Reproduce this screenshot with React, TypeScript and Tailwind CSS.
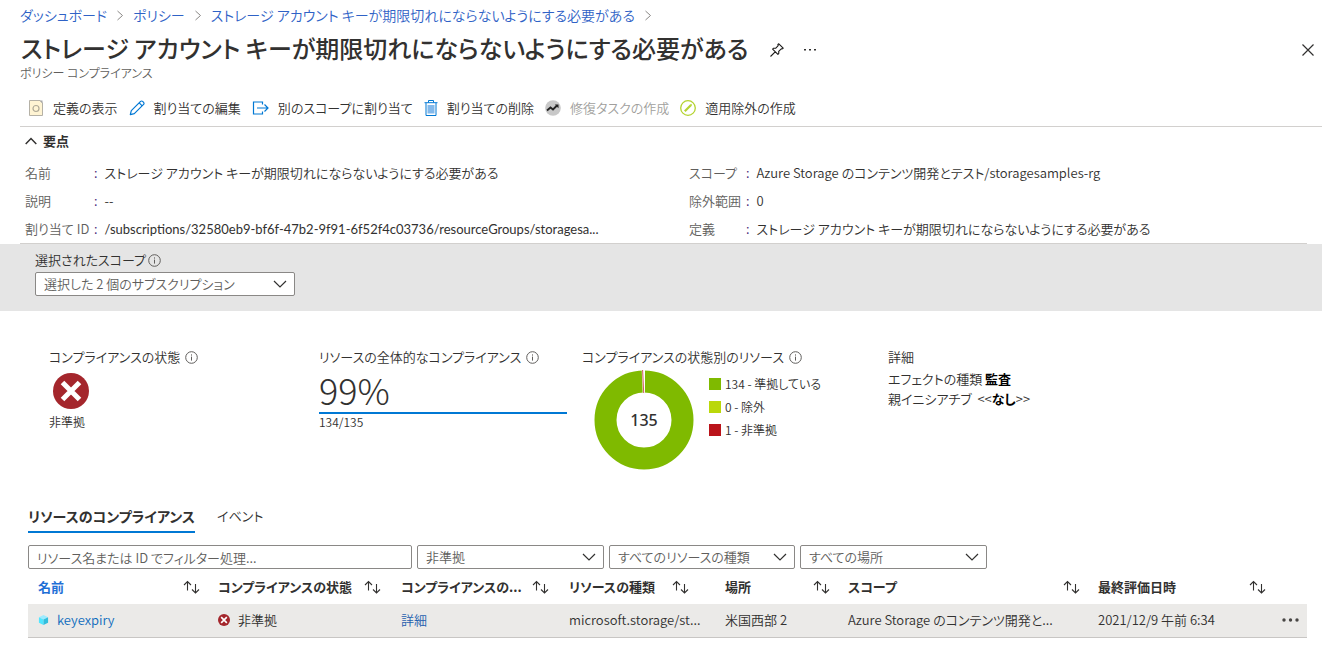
import React, { ReactNode } from 'react';

const TITLE = 'ストレージ アカウント キーが期限切れにならないようにする必要がある';

function ChevronRight() {
  return (
    <svg className="shrink-0 text-[#8a8886]" width="8" height="12" viewBox="0 0 8 12" fill="none" stroke="currentColor">
      <path d="M1.5 2l5 4.500-5 4.500" />
    </svg>
  );
}

function InfoIcon() {
  return (
    <svg className="shrink-0 text-[#605e5c]" width="13" height="13" viewBox="0 0 13 13" fill="none" stroke="currentColor">
      <circle cx="6.5" cy="6.5" r="5.8" />
      <path d="M6.5 5.6v4M6.5 3.4v1.2" />
    </svg>
  );
}

function PinIcon() {
  return (
    <svg width="14" height="14" viewBox="0 0 14 14" fill="none" stroke="#1b1a19" strokeWidth="1.1" strokeLinejoin="round">
      <path d="M8.8.8l4.4 4.4-1 .7-.9-.1-2.6 2.6.1 2-.9 1L2.600 6.100l1-.9 2 .1 2.600-2.600-.3-1.200zM5.200 8.800L.5 13.500" />
    </svg>
  );
}

function CloseIcon() {
  return (
    <svg width="14" height="14" viewBox="0 0 14 14" fill="none" stroke="#323130" strokeWidth="1.2">
      <path d="M1.500 1.500l11 11M12.500 1.500l-11 11" />
    </svg>
  );
}

function DefinitionIcon() {
  return (
    <svg width="16" height="16" viewBox="0 0 16 16" fill="none">
      <path d="M1.500.5h10.500l2.500 2.500v12.500h-13z" fill="#fff4d3" stroke="#b5b1a6" />
      <path d="M11.500.5l3 3v-3z" fill="#a8a8a8" />
      <circle cx="8" cy="8.500" r="3" stroke="#b0aa98" strokeWidth="1.200" />
    </svg>
  );
}

function PencilIcon() {
  return (
    <svg width="16" height="16" viewBox="0 0 16 16" fill="none" stroke="#0078d4" strokeWidth="1.200" strokeLinejoin="round">
      <path d="M1.300 14.700l1-4L11.600 1.400a1.400 1.400 0 0 1 2 0l1 1a1.400 1.400 0 0 1 0 2L5.300 13.700zM10.200 2.800l3 3" />
    </svg>
  );
}

function AssignIcon() {
  return (
    <svg width="17" height="14" viewBox="0 0 17 14" fill="none" stroke="#0078d4" strokeWidth="1.200">
      <path d="M10.500 3.500V1h-9v12h9v-2.500M5 7h11M12.500 3.500L16 7l-3.500 3.500" />
    </svg>
  );
}

function TrashIcon() {
  return (
    <svg width="14" height="16" viewBox="0 0 14 16" fill="none" stroke="#0078d4">
      <path d="M3.500 5h7v8.500h-7z" fill="#83b9eb" stroke="none" />
      <path d="M2 3v12.500h10V3M.500 2.700h13M4.500 2.500v-2h5v2" />
    </svg>
  );
}

function RemediationIcon() {
  return (
    <svg width="16" height="16" viewBox="0 0 16 16" fill="none">
      <circle cx="8" cy="8" r="7.800" fill="#c8c8c8" />
      <path d="M2 10.500l3.500-3 2.500 2 4-4" stroke="#222" strokeWidth="1.800" />
      <path d="M9.800 4.500h3.700v3.700z" fill="#222" />
    </svg>
  );
}

function ExemptionIcon() {
  return (
    <svg width="16" height="16" viewBox="0 0 16 16" fill="none" stroke="#b4d330">
      <circle cx="8" cy="8" r="7.300" strokeWidth="1.300" />
      <path d="M4.800 11.200l6-6" strokeWidth="2.200" />
      <path d="M10.600 5.400l1-1" strokeWidth="1.600" />
    </svg>
  );
}

function ErrorIcon({ size }: { size: number }) {
  return (
    <svg className="shrink-0" width={size} height={size} viewBox="0 0 36 36" fill="none">
      <circle cx="18" cy="18" r="18" fill="#a4262c" />
      <path d="M9.500 9.500l17 17M26.500 9.500l-17 17" stroke="#fff" strokeWidth="5" />
    </svg>
  );
}

function CubeIcon() {
  return (
    <svg className="shrink-0" width="11" height="12" viewBox="0 0 12 12">
      <path d="M6 .5l5 2.500L6 5.500 1 3z" fill="#9cebff" />
      <path d="M1 3l5 2.500v6L1 9z" fill="#50e6ff" />
      <path d="M11 3L6 5.500v6L11 9z" fill="#32bedd" />
    </svg>
  );
}

function SortIcon() {
  return (
    <svg className="shrink-0" width="17" height="14" viewBox="0 0 17 14" fill="none" stroke="#323130" strokeWidth="1.100">
      <path d="M4.500 10.500V1.500M1 5l3.500-3.500L8 5M12.500 4v9M9 9.500l3.500 3.500L16 9.500" />
    </svg>
  );
}

interface SelectBoxProps {
  label: string;
  value: string;
  id: string;
  className: string;
}

function SelectBox({ label, value, id, className }: SelectBoxProps) {
  return (
    <div className={`relative ${className}`}>
      <select
        id={id}
        aria-label={label}
        className="h-6 w-full appearance-none rounded-xs border border-[#8a8886] bg-white pr-8 pl-2 text-[13px] text-[#605e5c]"
      >
        <option>{value}</option>
      </select>
      <svg className="pointer-events-none absolute top-2 right-2" width="14" height="9" viewBox="0 0 14 9" fill="none" stroke="#323130" strokeWidth="1.200">
        <path d="M1 1l6 6 6-6" />
      </svg>
    </div>
  );
}

interface Command {
  label: string;
  icon: ReactNode;
  disabled?: boolean;
}

const commands: Command[] = [
  { label: '定義の表示', icon: <DefinitionIcon /> },
  { label: '割り当ての編集', icon: <PencilIcon /> },
  { label: '別のスコープに割り当て', icon: <AssignIcon /> },
  { label: '割り当ての削除', icon: <TrashIcon /> },
  { label: '修復タスクの作成', icon: <RemediationIcon />, disabled: true },
  { label: '適用除外の作成', icon: <ExemptionIcon /> },
];

interface EssentialItem {
  label: string;
  value: string;
  path?: boolean;
}

const essentialsLeft: EssentialItem[] = [
  { label: '名前', value: TITLE },
  { label: '説明', value: '--' },
  {
    label: '割り当て ID',
    value: '/subscriptions/32580eb9-bf6f-47b2-9f91-6f52f4c03736/resourceGroups/storagesa...',
    path: true,
  },
];

const essentialsRight: EssentialItem[] = [
  { label: 'スコープ', value: 'Azure Storage のコンテンツ開発とテスト/storagesamples-rg' },
  { label: '除外範囲', value: '0' },
  { label: '定義', value: TITLE },
];

function Essentials({ items, labelClass }: { items: EssentialItem[]; labelClass: string }) {
  return (
    <dl className="min-w-0">
      {items.map((item) => (
        <div key={item.label} className="flex h-7 items-center whitespace-nowrap">
          <dt className={`shrink-0 text-[#605e5c] ${labelClass}`}>{item.label}</dt>
          <dd className="flex gap-[7px]">
            <span className="text-[#4b2a7b]">:</span>
            <span className={item.path ? 'font-[Lato,sans-serif] font-normal' : ''}>{item.value}</span>
          </dd>
        </div>
      ))}
    </dl>
  );
}

function CardTitle({ children }: { children: ReactNode }) {
  return (
    <h2 className="flex h-5 items-center gap-[5px] whitespace-nowrap">
      {children}
      <InfoIcon />
    </h2>
  );
}

const legend = [
  { label: '134 - 準拠している', color: 'bg-[#7fba00]' },
  { label: '0 - 除外', color: 'bg-[#bad80a]' },
  { label: '1 - 非準拠', color: 'bg-[#ba141a]' },
];

function Donut() {
  return (
    <svg className="shrink-0" width="100" height="100" viewBox="0 0 100 100" role="img" aria-label="135">
      <circle cx="50" cy="50" r="38.500" fill="none" stroke="#7fba00" strokeWidth="22" />
      <path d="M47.700 0L51 0v23h-2.300z" fill="#fff" />
      <path d="M48.600 0L49.700 23" stroke="#ba141a" strokeWidth=".7" />
      <text x="50" y="56" textAnchor="middle" fill="#323130" className="font-[Noto_Sans,sans-serif] text-base font-medium">
        135
      </text>
    </svg>
  );
}

const columns = [
  { label: '名前', width: 'w-[180px] pr-2', active: true },
  { label: 'コンプライアンスの状態', width: 'w-[183px] pr-2.5' },
  { label: 'コンプライアンスの...', width: 'w-[168px] pr-2.5' },
  { label: 'リソースの種類', width: 'w-[156px] pr-[26px]' },
  { label: '場所', width: 'w-[123px] pr-2' },
  { label: 'スコープ', width: 'w-[250px] pr-2' },
  { label: '最終評価日時', width: 'w-[188px] pr-2.5' },
];

export default function App() {
  return (
    <div className="min-h-screen bg-white font-[Noto_Sans_CJK_JP,sans-serif] text-[13px] leading-5 font-[350] text-[#323130] [font-feature-settings:'palt']">
      <nav className="flex h-8 items-center gap-[9px] pb-0.5 pl-5 text-sm whitespace-nowrap text-[#2f62c6]">
        <a href="#dashboard">ダッシュボード</a>
        <ChevronRight />
        <a href="#policy">ポリシー</a>
        <ChevronRight />
        <a href="#assignment">{TITLE}</a>
        <ChevronRight />
      </nav>

      <header className="flex items-center pr-[7px] pl-[21px]">
        <h1 className="text-2xl leading-8 font-medium whitespace-nowrap">{TITLE}</h1>
        <button type="button" aria-label="ピン留め" className="ml-[22px] pt-1">
          <PinIcon />
        </button>
        <button type="button" aria-label="その他" className="ml-5 pt-1">
          <svg width="12" height="4" viewBox="0 0 12 4" fill="#323130">
            <path d="M0 1h2v1.500H0zM5 1h2v1.500H5zM10 1h2v1.500h-2z" />
          </svg>
        </button>
        <button type="button" aria-label="閉じる" className="ml-auto pt-1">
          <CloseIcon />
        </button>
      </header>
      <p className="mt-px pl-5 text-xs leading-4 text-[#605e5c]">ポリシー コンプライアンス</p>

      <div className="ml-5 flex h-[46px] items-center gap-[11px] border-b border-[#d2d0ce] pt-2 pl-2 whitespace-nowrap">
        {commands.map((c) => (
          <button key={c.label} type="button" disabled={c.disabled} className="flex items-center gap-[9px] disabled:text-[#a19f9d]">
            {c.icon}
            {c.label}
          </button>
        ))}
      </div>

      <section className="mr-[15px] ml-5 border-b border-[#d2d0ce] pl-[5px]">
        <button type="button" className="mb-1 flex h-7 items-center gap-1.5 font-bold">
          <svg width="12" height="8" viewBox="0 0 12 8" fill="none" stroke="#323130" strokeWidth="1.500">
            <path d="M.700 7L6 1.500 11.300 7" />
          </svg>
          要点
        </button>
        <div className="grid grid-cols-[664fr_618fr]">
          <Essentials items={essentialsLeft} labelClass="w-[69px]" />
          <Essentials items={essentialsRight} labelClass="w-[57px]" />
        </div>
      </section>

      <section className="bg-[#e5e5e5] px-[35px] pt-1.5 pb-[15px]">
        <label htmlFor="scope" className="flex h-5 items-center gap-0.5">
          選択されたスコープ
          <InfoIcon />
        </label>
        <SelectBox id="scope" label="選択されたスコープ" value="選択した 2 個のサブスクリプション" className="mt-0.5 w-[260px]" />
      </section>

      <section className="grid h-[195px] grid-cols-[270fr_263fr_306fr_434fr] pt-9 pl-[49px]">
        <div>
          <CardTitle>コンプライアンスの状態</CardTitle>
          <div className="mt-1.5 ml-1">
            <ErrorIcon size={36} />
          </div>
          <p className="mt-[3px] text-xs leading-5">非準拠</p>
        </div>
        <div className="mr-[15px]">
          <CardTitle>リソースの全体的なコンプライアンス</CardTitle>
          <div className="border-b-2 border-[#0078d4] pb-px text-4xl leading-11 font-light">99%</div>
          <p className="text-xs leading-4">134/135</p>
        </div>
        <div>
          <CardTitle>コンプライアンスの状態別のリソース</CardTitle>
          <div className="mt-[3px] ml-3 flex gap-[15px]">
            <Donut />
            <ul className="pt-0.5">
              {legend.map((item) => (
                <li key={item.label} className="flex h-[23px] items-center gap-1 text-xs whitespace-nowrap">
                  <span className={`size-3 ${item.color}`} />
                  {item.label}
                </li>
              ))}
            </ul>
          </div>
        </div>
        <div>
          <h2>詳細</h2>
          <p className="pt-0.5">
            エフェクトの種類 <b className="font-bold text-black">監査</b>
          </p>
          <p>
            親イニシアチブ &nbsp;&lt;&lt;<b className="font-bold text-black">なし</b>&gt;&gt;
          </p>
        </div>
      </section>

      <section className="mr-[15px] ml-7">
        <div role="tablist" className="flex gap-[22px] whitespace-nowrap">
          <button type="button" role="tab" aria-selected="true" className="h-[27px] border-b-2 border-[#0078d4] pb-2.5 text-sm font-bold">
            リソースのコンプライアンス
          </button>
          <button type="button" role="tab" aria-selected="false" className="h-[27px] pb-3">
            イベント
          </button>
        </div>

        <div className="mt-3 flex gap-[5px]">
          <input
            type="text"
            aria-label="フィルター"
            placeholder="リソース名または ID でフィルター処理..."
            className="h-6 w-96 rounded-xs border border-[#8a8886] px-2 text-[13px] placeholder:text-[#605e5c]"
          />
          <SelectBox id="state" label="コンプライアンスの状態" value="非準拠" className="w-[187px]" />
          <SelectBox id="type" label="リソースの種類" value="すべてのリソースの種類" className="w-[186px]" />
          <SelectBox id="location" label="場所" value="すべての場所" className="w-[187px]" />
        </div>

        <table className="w-full table-fixed text-left whitespace-nowrap">
          <thead>
            <tr className="h-[35px]">
              {columns.map((col) => (
                <th key={col.label} scope="col" className={`pl-2.5 font-bold ${col.width}`}>
                  <button type="button" className={`flex w-full items-center justify-between ${col.active ? 'text-[#1f6fd6]' : ''}`}>
                    {col.label}
                    <SortIcon />
                  </button>
                </th>
              ))}
              <th />
            </tr>
          </thead>
          <tbody>
            <tr className="h-[33px] border-b border-[#c8c6c4] bg-[#ebeae8]">
              <td className="pl-2.5">
                <a href="#keyexpiry" className="flex items-center gap-2 text-[#0f6cbd]">
                  <CubeIcon />
                  keyexpiry
                </a>
              </td>
              <td className="pl-2.5">
                <span className="flex items-center gap-2">
                  <ErrorIcon size={12} />
                  非準拠
                </span>
              </td>
              <td className="pl-2.5">
                <a href="#details" className="text-[#1f5fae]">
                  詳細
                </a>
              </td>
              <td className="pl-2.5">microsoft.storage/st...</td>
              <td className="pl-2.5">米国西部 2</td>
              <td className="pl-2.5">Azure Storage のコンテンツ開発と...</td>
              <td className="pl-2.5">2021/12/9 午前 6:34</td>
              <td className="pr-2 text-right">
                <button type="button" aria-label="その他の操作" className="pb-1 align-middle">
                  <svg width="17" height="4" viewBox="0 0 17 4" fill="#484644">
                    <circle cx="2" cy="2" r="1.700" />
                    <circle cx="8.500" cy="2" r="1.700" />
                    <circle cx="15" cy="2" r="1.700" />
                  </svg>
                </button>
              </td>
            </tr>
          </tbody>
        </table>
      </section>
    </div>
  );
}
